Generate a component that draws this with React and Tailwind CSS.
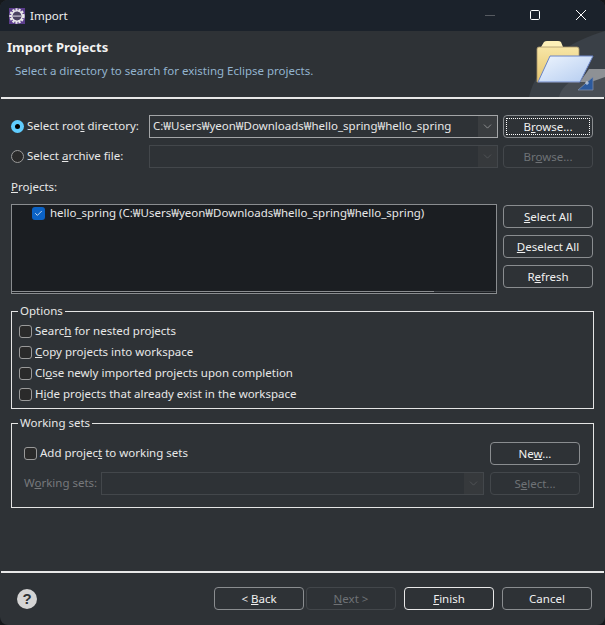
import { ChevronDown, Check } from 'lucide-react'

function Btn({ children, disabled, focus, strong, className = '' }) {
  let look = 'border-[#8a8d90] text-[#f0f0f0]'
  if (disabled) look = 'border-[#43474b] text-[#6f7276]'
  if (strong) look = 'border-[#e8e8e8] text-[#f0f0f0]'
  return (
    <button className={`relative h-[23px] w-[90px] shrink-0 rounded-[4px] border text-[11.5px] leading-[20px] ${look} ${className}`}>
      {focus && <span className="absolute inset-[2px] border border-dotted border-white" />}
      {children}
    </button>
  )
}

function Combo({ value, disabled, className = '' }) {
  return (
    <div className={`flex h-[23px] items-stretch border ${disabled ? 'border-[#43474b]' : 'border-[#a3a5a7]'} ${className}`}>
      <div className="flex-1 truncate pl-[3px] leading-[20px] text-[#e8e8e8]">{value}</div>
      <div className={`flex w-[19px] items-center justify-center ${disabled ? 'bg-[#36393c] text-[#5c5f62]' : 'bg-[#3a3d40] text-[#b5b5b5]'}`}>
        <ChevronDown size={13} strokeWidth={1.2} />
      </div>
    </div>
  )
}

function Radio({ on, children }) {
  return (
    <div className="flex items-center gap-[3px] text-[#e8e8e8]">
      {on ? (
        <span className="flex h-[13px] w-[13px] items-center justify-center rounded-full bg-[#60cdff]">
          <span className="h-[5px] w-[5px] rounded-full bg-black" />
        </span>
      ) : (
        <span className="h-[13px] w-[13px] rounded-full border border-[#9a9a9a] bg-[#2a2a2a]" />
      )}
      <span className="-mt-[2px]">{children}</span>
    </div>
  )
}

function Box({ children, className = '' }) {
  return (
    <div className={`flex h-[21px] items-center gap-[3px] text-[#e8e8e8] ${className}`}>
      <span className="h-[13px] w-[13px] rounded-[3px] border border-[#9a9a9a] bg-[#2a2a2a]" />
      <span className="-mt-[1px]">{children}</span>
    </div>
  )
}

function Group({ title, className = '', children }) {
  return (
    <div className={`relative mx-[11px] border border-[#e4e4e4] ${className}`}>
      <span className="absolute -top-[10px] left-[6px] bg-[#2e3236] px-[2px] leading-[18px] text-[#e8e8e8]">{title}</span>
      {children}
    </div>
  )
}

function FolderArt() {
  return (
    <svg className="absolute right-0 top-0" width="80" height="66" viewBox="0 0 80 66">
      <defs>
        <linearGradient id="back" x1="0" y1="0" x2="0" y2="1">
          <stop offset="0" stopColor="#f7e6a6" />
          <stop offset="1" stopColor="#e6c56f" />
        </linearGradient>
        <linearGradient id="front" x1="0" y1="0" x2="1" y2="1">
          <stop offset="0" stopColor="#eef5fe" />
          <stop offset="1" stopColor="#b4ccf0" />
        </linearGradient>
      </defs>
      <path d="M80 0 C46 10 12 30 4 66 L80 66 Z" fill="#3a4047" />
      <path d="M80 38 C58 42 38 50 34 66 L80 66 Z" fill="#494e55" />
      <path d="M16 16 L19 11 Q20 10 22 10 L33 10 Q35 10 36 11 L38 16 Z" fill="#fdf0b8" />
      <path d="M12 18 Q12 16 14 16 L52 16 Q54 16 54 18 L54 51 L12 51 Z" fill="url(#back)" stroke="#a8966a" strokeWidth="0.8" />
      <path d="M55 51 L64 38 L80 38 L80 46 L66 51 Z" fill="#8e9195" />
      <path d="M53 59 L68 46 L68 59 Z" fill="#2c5a9e" stroke="#7d8ba3" strokeWidth="0.8" />
      <path d="M62 50 L62 54 M60 52 L64 52" stroke="#dfe8f5" strokeWidth="0.8" />
      <path d="M25 25 L68 25 L55 51 L13 51 Z" fill="url(#front)" stroke="#6a84c6" strokeWidth="1" strokeLinejoin="round" />
    </svg>
  )
}

export default function App() {
  return (
    <div className="w-[605px] h-[625px] bg-[#15181b]">
      <div className="flex h-[625px] w-[605px] flex-col overflow-hidden rounded-[8px] bg-[#2e3236] font-['Noto_Sans','Noto_Sans_CJK_KR',sans-serif] text-[11.5px]">
        <div className="flex h-[31px] shrink-0 items-center bg-[#1b222b]">
          <svg className="ml-[9px]" width="16" height="16" viewBox="0 0 16 16">
            <rect width="16" height="16" fill="#5b3d8c" />
            <circle cx="8" cy="8" r="6.2" fill="none" stroke="#e8e8e8" strokeWidth="3" strokeDasharray="2 1" />
            <circle cx="8" cy="8" r="5.2" fill="none" stroke="#e8e8e8" strokeWidth="1.6" />
            <circle cx="8" cy="8" r="4.3" fill="#4b4460" />
            <rect x="3.8" y="7.5" width="8.4" height="1.2" fill="#c9c4d6" />
          </svg>
          <span className="ml-[5px] text-[#f0f0f0]">Import</span>
          <svg className="ml-auto" width="116" height="31" viewBox="0 0 116 31">
            <path d="M0 15.5 H10" stroke="#565a60" strokeWidth="1" />
            <rect x="45.5" y="10.5" width="9" height="9" rx="1.2" fill="none" stroke="#fff" strokeWidth="1" />
            <path d="M91 10 L101 20 M101 10 L91 20" stroke="#fff" strokeWidth="1" />
          </svg>
          <span className="w-[4px]" />
        </div>

        <div className="relative h-[66px] shrink-0 overflow-hidden pl-[7px] pt-[6px]">
          <FolderArt />
          <div className="relative text-[13px] font-bold leading-[20px] text-[#f2f2f2]">Import Projects</div>
          <div className="relative ml-[8px] mt-[5px] leading-[18px] text-[#93b4cf]">Select a directory to search for existing Eclipse projects.</div>
        </div>
        <div className="ml-[1px] mr-[1px] h-[2px] shrink-0 bg-[#e8e8e8]" />

        <div className="mt-[16px] flex h-[23px] items-center pl-[11px] pr-[12px]">
          <div className="w-[138px]"><Radio on>Select roo<u>t</u> directory:</Radio></div>
          <Combo className="w-[349px]" value="C:₩Users₩yeon₩Downloads₩hello_spring₩hello_spring" />
          <Btn focus className="ml-[5px]">B<u>r</u>owse...</Btn>
        </div>
        <div className="mt-[7px] flex h-[23px] items-center pl-[11px] pr-[12px]">
          <div className="w-[138px]"><Radio>Select <u>a</u>rchive file:</Radio></div>
          <Combo disabled className="w-[349px]" />
          <Btn disabled className="ml-[5px]">Br<u>o</u>wse...</Btn>
        </div>

        <div className="ml-[11px] mt-[10px] leading-[18px] text-[#e8e8e8]"><u>P</u>rojects:</div>

        <div className="ml-[11px] mt-[8px] flex">
          <div className="relative h-[90px] w-[486px] border border-[#8a8d90] bg-[#1b1e22]">
            <div className="ml-[20px] flex items-center gap-[5px] text-[#e8e8e8]">
              <span className="flex h-[13px] w-[13px] items-center justify-center rounded-[3px] bg-[#0b62c4] text-white">
                <Check size={9} strokeWidth={2} />
              </span>
              <span className="leading-[16px]">hello_spring (C:₩Users₩yeon₩Downloads₩hello_spring₩hello_spring)</span>
            </div>
            <div className="absolute bottom-0 left-0 h-[2px] w-[423px] border-t border-[#8a8d90]" />
            <div className="absolute bottom-0 right-0 h-[2px] w-[62px] border-t border-[#44484c]" />
          </div>
          <div className="ml-[6px] mt-[1px] flex flex-col gap-[7px]">
            <Btn><u>S</u>elect All</Btn>
            <Btn><u>D</u>eselect All</Btn>
            <Btn>R<u>e</u>fresh</Btn>
          </div>
        </div>

        <Group title="Options" className="mt-[17px] h-[98px] pl-[7px] pt-[9px]">
          <Box>Searc<u>h</u> for nested projects</Box>
          <Box><u>C</u>opy projects into workspace</Box>
          <Box>Cl<u>o</u>se newly imported projects upon completion</Box>
          <Box>H<u>i</u>de projects that already exist in the workspace</Box>
        </Group>

        <Group title="Working sets" className="mt-[14px] h-[85px]">
          <div className="ml-[12px] mr-[13px] mt-[18px] flex h-[23px] items-center">
            <Box>Add projec<u>t</u> to working sets</Box>
            <Btn className="ml-auto">Ne<u>w</u>...</Btn>
          </div>
          <div className="ml-[12px] mr-[13px] mt-[7px] flex h-[23px] items-center">
            <span className="-mt-[1px] w-[77px] text-[#77797c]">W<u>o</u>rking sets:</span>
            <Combo disabled className="w-[383px]" />
            <Btn disabled className="ml-auto">S<u>e</u>lect...</Btn>
          </div>
        </Group>

        <div className="ml-[1px] mr-[1px] mt-[63px] h-[2px] shrink-0 bg-[#e8e8e8]" />

        <div className="mt-[14px] flex items-center pl-[17px]">
          <svg width="20" height="20" viewBox="0 0 20 20">
            <circle cx="10" cy="10" r="10" fill="#d4d4d4" />
            <text x="10" y="15" textAnchor="middle" fontSize="15" fontWeight="700" fill="#2e3236" fontFamily="Liberation Sans">?</text>
          </svg>
          <Btn className="ml-[177px]">&lt; <u>B</u>ack</Btn>
          <Btn disabled className="ml-[2px]"><u>N</u>ext &gt;</Btn>
          <Btn strong className="ml-[8px]"><u>F</u>inish</Btn>
          <Btn className="ml-[8px]">Cancel</Btn>
        </div>
      </div>
    </div>
  )
}
